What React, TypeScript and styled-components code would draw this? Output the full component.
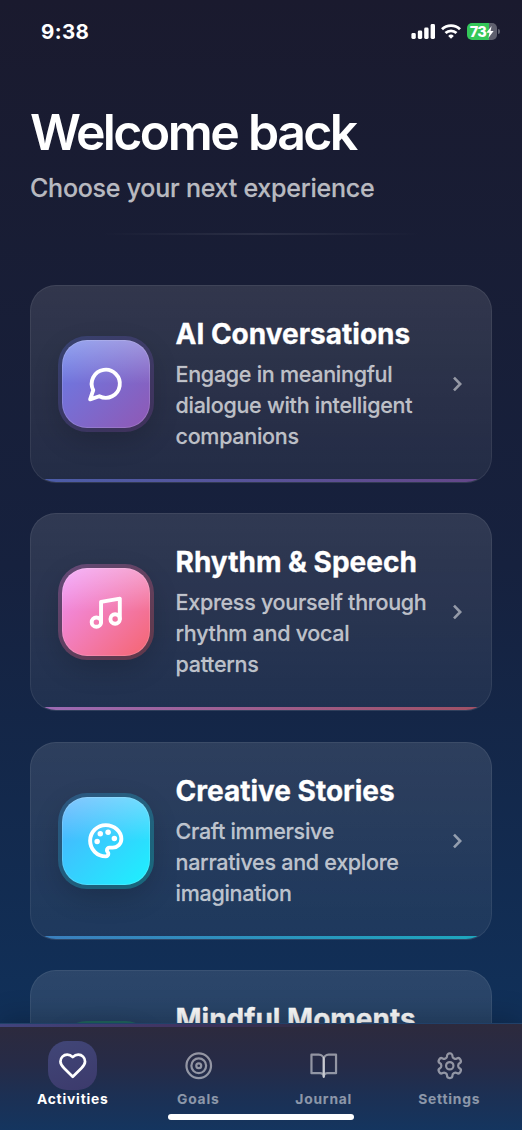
import React from 'react';
import styled, { createGlobalStyle, css } from 'styled-components';

const GlobalStyle = createGlobalStyle`
  *, *::before, *::after { box-sizing: border-box; }
  body {
    margin: 0;
    background: #0f3460;
    font-family: Inter, 'Liberation Sans', sans-serif;
    -webkit-font-smoothing: antialiased;
  }
  svg { display: block; }
`;

const Screen = styled.div`
  position: relative;
  display: flex;
  flex-direction: column;
  width: 522px;
  height: 1130px;
  overflow: hidden;
  background: linear-gradient(180deg, #1a1a2e 0%, #16213e 50%, #0f3460 100%);
`;

const StatusBar = styled.header`
  display: flex;
  flex: none;
  align-items: center;
  justify-content: space-between;
  height: 63px;
  padding: 0 22px 0 41px;
`;

const Clock = styled.span`
  color: #fff;
  font-size: 20.5px;
  font-weight: 700;
  line-height: 24px;
  letter-spacing: 0.4px;
`;

const StatusIcons = styled.div`
  display: flex;
  align-items: center;
  gap: 6px;
`;

const Battery = styled.div`
  display: flex;
  align-items: center;
  gap: 1px;
`;

const BatteryBody = styled.div`
  display: flex;
  align-items: center;
  justify-content: center;
  width: 30px;
  height: 17px;
  border-radius: 5px;
  background: linear-gradient(90deg, #34c759 73%, #5f606e 73%);
  color: #fff;
  font-size: 14.5px;
  font-weight: 800;
  line-height: 17px;
  letter-spacing: -0.6px;
`;

const BatteryCap = styled.div`
  width: 2px;
  height: 5px;
  border-radius: 0 2px 2px 0;
  background: #5f606e;
`;

const Intro = styled.div`
  flex: none;
  height: 222px;
  padding: 39px 30px 0;
`;

const Heading = styled.h1`
  margin: 0;
  color: #fff;
  font-size: 50px;
  font-weight: 600;
  line-height: 60px;
  letter-spacing: -2.6px;
  word-spacing: 1px;
`;

const Subheading = styled.p`
  margin: 10px 0 0;
  color: rgba(255, 255, 255, 0.7);
  font-size: 25px;
  font-weight: 500;
  line-height: 32px;
  letter-spacing: -0.24px;
  -webkit-text-stroke: 0.3px rgba(255, 255, 255, 0.35);
`;

const Divider = styled.div`
  height: 2px;
  margin: 29px 70px 0;
  background: linear-gradient(90deg, transparent, rgba(255, 255, 255, 0.08), transparent);
`;

const CardList = styled.main`
  display: flex;
  flex: 1;
  flex-direction: column;
  gap: 30.4px;
  min-height: 0;
  padding: 0 30px;
  overflow: hidden;
`;

const Card = styled.article`
  position: relative;
  display: flex;
  flex: none;
  align-items: center;
  height: 198px;
  padding: 0 28px 0 31px;
  overflow: hidden;
  border: 1px solid rgba(255, 255, 255, 0.07);
  border-radius: 26px;
  background: linear-gradient(180deg, rgba(255, 255, 255, 0.115), rgba(255, 255, 255, 0.055)) border-box;
`;

const CardAccent = styled.div<{ $from: string; $to: string }>`
  position: absolute;
  right: 0;
  bottom: 0;
  left: 0;
  height: 3px;
  background: linear-gradient(90deg, ${p => p.$from}, ${p => p.$to});
  opacity: 0.6;
`;

const IconTile = styled.div<{ $from: string; $to: string }>`
  position: relative;
  display: flex;
  flex: none;
  align-items: center;
  justify-content: center;
  width: 88px;
  height: 88px;
  border-radius: 26px;
  box-shadow: 0 10px 30px rgba(0, 0, 0, 0.2);

  &::before {
    content: '';
    position: absolute;
    inset: -4px;
    border-radius: 29px;
    background: linear-gradient(135deg, ${p => p.$from}, ${p => p.$to});
    filter: brightness(0.65);
    opacity: 0.5;
  }
`;

const IconFace = styled.div<{ $from: string; $to: string }>`
  position: relative;
  display: flex;
  align-items: center;
  justify-content: center;
  width: 88px;
  height: 88px;
  border: 1px solid rgba(255, 255, 255, 0.14);
  border-radius: 25px;
  background:
    linear-gradient(180deg, rgba(255, 255, 255, 0.3), transparent 50%) border-box,
    linear-gradient(135deg, ${p => p.$from}, ${p => p.$to}) border-box;
  color: #fff;
`;

const CardText = styled.div`
  flex: 1;
  min-width: 0;
  padding: 2px 0 0 25.5px;
`;

const CardTitle = styled.h2`
  margin: 0 0 9px;
  color: #fff;
  font-size: 28px;
  font-weight: 700;
  line-height: 32px;
  letter-spacing: 0;
  white-space: nowrap;
  -webkit-text-stroke: 0.3px #fff;
`;

const CardCopy = styled.p`
  min-height: 93px;
  margin: 0;
  color: rgba(255, 255, 255, 0.7);
  font-size: 21.5px;
  font-weight: 500;
  line-height: 31px;
  letter-spacing: -0.28px;
  white-space: pre-line;
  -webkit-text-stroke: 0.3px rgba(255, 255, 255, 0.35);
`;

const TabBar = styled.nav`
  position: relative;
  display: flex;
  flex: none;
  height: 107.5px;
  padding: 17.5px 10px 0;
  border-top: 1px solid rgba(255, 255, 255, 0.06);
  background: linear-gradient(180deg, #2d2a3d 0%, #262b47 38%, #1c3054 68%, #14355f 100%);
  box-shadow: 0 -5px 26px rgba(0, 0, 0, 0.22);
`;

const TabGlow = styled.div`
  position: absolute;
  top: 0;
  left: 0;
  width: 345px;
  height: 3px;
  background: linear-gradient(90deg, #41447e 0%, #403462 50%, rgba(64, 48, 90, 0) 100%);
`;

const Tab = styled.div<{ $active?: boolean }>`
  display: flex;
  flex: 1;
  flex-direction: column;
  align-items: center;
  color: ${p => (p.$active ? '#fff' : 'rgba(255, 255, 255, 0.5)')};
`;

const TabIcon = styled.div<{ $active?: boolean }>`
  display: flex;
  align-items: center;
  justify-content: center;
  width: 49px;
  height: 49px;
  border-radius: 19px;
  ${p => p.$active && css`
    background: linear-gradient(160deg, #414677, #3c3a6c);
  `}
`;

const TabLabel = styled.span`
  margin-top: -0.5px;
  font-size: 13.8px;
  font-weight: 700;
  line-height: 18px;
  letter-spacing: 0.8px;
`;

const HomeIndicator = styled.div`
  position: absolute;
  bottom: 10px;
  left: 168px;
  width: 186px;
  height: 6.5px;
  border-radius: 4px;
  background: #fff;
`;

type IconProps = { size: number; width: number; children: React.ReactNode };

const Icon = ({ size, width, children }: IconProps) => (
  <svg
    width={size}
    height={size}
    viewBox="0 0 24 24"
    fill="none"
    stroke="currentColor"
    strokeWidth={width}
    strokeLinecap="round"
    strokeLinejoin="round"
  >
    {children}
  </svg>
);

const bubble = <path d="M7.9 20A9 9 0 1 0 4 16.1L2 22Z" />;
const notes = (
  <>
    <path d="M9 18V5l12-2v13" />
    <circle cx="6" cy="18" r="3" />
    <circle cx="18" cy="16" r="3" />
  </>
);
const palette = (
  <>
    <g fill="currentColor" stroke="none">
      <circle cx="13.5" cy="6.5" r="1.75" />
      <circle cx="17.5" cy="10.5" r="1.75" />
      <circle cx="8.5" cy="7.5" r="1.75" />
      <circle cx="6.5" cy="12.5" r="1.75" />
    </g>
    <path d="M12 2C6.5 2 2 6.5 2 12s4.5 10 10 10c.926 0 1.648-.746 1.648-1.688 0-.437-.18-.835-.437-1.125-.29-.289-.438-.652-.438-1.125a1.64 1.64 0 0 1 1.668-1.668h1.996c3.051 0 5.555-2.503 5.555-5.554C21.965 6.012 17.461 2 12 2z" />
  </>
);
const heart = (
  <path d="M19 14c1.49-1.46 3-3.21 3-5.5A5.5 5.5 0 0 0 16.5 3c-1.76 0-3 .5-4.5 2-1.5-1.5-2.74-2-4.5-2A5.5 5.5 0 0 0 2 8.5c0 2.3 1.5 4.05 3 5.5l7 7Z" />
);
const target = (
  <>
    <circle cx="12" cy="12" r="10" />
    <circle cx="12" cy="12" r="6" />
    <circle cx="12" cy="12" r="2" />
  </>
);
const book = (
  <>
    <path d="M2 3h6a4 4 0 0 1 4 4v14a3 3 0 0 0-3-3H2z" />
    <path d="M22 3h-6a4 4 0 0 0-4 4v14a3 3 0 0 1 3-3h7z" />
  </>
);
const gear = (
  <>
    <path d="M12.22 2h-.44a2 2 0 0 0-2 2v.18a2 2 0 0 1-1 1.73l-.43.25a2 2 0 0 1-2 0l-.15-.08a2 2 0 0 0-2.73.73l-.22.38a2 2 0 0 0 .73 2.73l.15.1a2 2 0 0 1 1 1.72v.51a2 2 0 0 1-1 1.74l-.15.09a2 2 0 0 0-.73 2.73l.22.38a2 2 0 0 0 2.73.73l.15-.08a2 2 0 0 1 2 0l.43.25a2 2 0 0 1 1 1.73V20a2 2 0 0 0 2 2h.44a2 2 0 0 0 2-2v-.18a2 2 0 0 1 1-1.73l.43-.25a2 2 0 0 1 2 0l.15.08a2 2 0 0 0 2.73-.73l.22-.39a2 2 0 0 0-.73-2.73l-.15-.08a2 2 0 0 1-1-1.74v-.5a2 2 0 0 1 1-1.74l.15-.09a2 2 0 0 0 .73-2.73l-.22-.38a2 2 0 0 0-2.73-.73l-.15.08a2 2 0 0 1-2 0l-.43-.25a2 2 0 0 1-1-1.73V4a2 2 0 0 0-2-2z" />
    <circle cx="12" cy="12" r="3" />
  </>
);

const activities = [
  { title: 'AI Conversations', copy: 'Engage in meaningful\ndialogue with intelligent\ncompanions', from: '#667eea', to: '#9058b4', icon: bubble },
  { title: 'Rhythm & Speech', copy: 'Express yourself through\nrhythm and vocal\npatterns', from: '#f093fb', to: '#f5656f', icon: notes },
  { title: 'Creative Stories', copy: 'Craft immersive\nnarratives and explore\nimagination', from: '#4facfe', to: '#1cf2fe', icon: palette },
  { title: 'Mindful Moments', copy: '', from: '#2bd38a', to: '#2be3a1', icon: heart },
];

const tabs = [
  { label: 'Activities', icon: heart },
  { label: 'Goals', icon: target },
  { label: 'Journal', icon: book },
  { label: 'Settings', icon: gear },
];

export default function App() {
  return (
    <>
      <GlobalStyle />
      <Screen>
        <StatusBar>
          <Clock>9:38</Clock>
          <StatusIcons>
            <svg width="24" height="15" viewBox="0 0 24 15" fill="#fff">
              <rect x="0.4" y="9" width="4.4" height="6" rx="1.4" />
              <rect x="6.8" y="6.5" width="4.4" height="8.5" rx="1.4" />
              <rect x="13.2" y="3.5" width="4.4" height="11.5" rx="1.4" />
              <rect x="19.6" y="0" width="4.4" height="15" rx="1.4" />
            </svg>
            <svg width="20" height="15" viewBox="0 0 20 15" fill="none" stroke="#fff" strokeWidth="2.8">
              <path d="M1 5.2a13 13 0 0 1 18 0" />
              <path d="M4.5 9a8 8 0 0 1 11 0" />
              <path d="M10 14.8L7.2 11.9a4 4 0 0 1 5.6 0z" fill="#fff" stroke="none" />
            </svg>
            <Battery>
              <BatteryBody>
                73
                <svg width="8" height="12" viewBox="0 0 8 12" fill="#fff">
                  <path d="M5.6 0L.4 6.8h3L2.4 12l5.2-7h-3z" />
                </svg>
              </BatteryBody>
              <BatteryCap />
            </Battery>
          </StatusIcons>
        </StatusBar>

        <Intro>
          <Heading>Welcome back</Heading>
          <Subheading>Choose your next experience</Subheading>
          <Divider />
        </Intro>

        <CardList>
          {activities.map(a => (
            <Card key={a.title}>
              <IconTile $from={a.from} $to={a.to}>
                <IconFace $from={a.from} $to={a.to}>
                  <Icon size={37.5} width={2.5}>{a.icon}</Icon>
                </IconFace>
              </IconTile>
              <CardText>
                <CardTitle>{a.title}</CardTitle>
                <CardCopy>{a.copy}</CardCopy>
              </CardText>
              <svg width="11" height="16" viewBox="0 0 11 16" fill="none" stroke="rgba(255,255,255,0.5)" strokeWidth="2.6">
                <path d="M2 1.6L8.2 8L2 14.4" />
              </svg>
              <CardAccent $from={a.from} $to={a.to} />
            </Card>
          ))}
        </CardList>

        <TabBar>
          <TabGlow />
          {tabs.map((t, i) => (
            <Tab key={t.label} $active={i === 0}>
              <TabIcon $active={i === 0}>
                <Icon size={29.5} width={i === 0 ? 2.2 : 1.8}>{t.icon}</Icon>
              </TabIcon>
              <TabLabel>{t.label}</TabLabel>
            </Tab>
          ))}
          <HomeIndicator />
        </TabBar>
      </Screen>
    </>
  );
}
